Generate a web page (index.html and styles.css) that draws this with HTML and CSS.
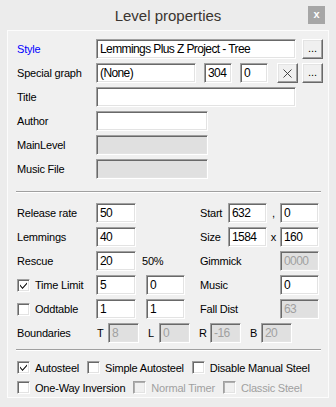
FILE: index.html
```html
<!DOCTYPE html>
<html>
<head>
<meta charset="utf-8">
<link rel="stylesheet" href="styles.css">
</head>
<body>
<div class="window">
  <div class="titlebar">
    <span class="title">Level properties</span>
    <span class="close">x</span>
  </div>
  <div class="panel">
    <div class="top">
      <div class="row">
        <span class="lbl blue">Style</span>
        <span class="edit w200">Lemmings Plus Z Project - Tree</span>
        <span class="btn ml6">...</span>
      </div>
      <div class="row">
        <span class="lbl">Special graph</span>
        <span class="edit w100">(None)</span>
        <span class="edit w28 ml8">304</span>
        <span class="edit w28 ml8">0</span>
        <span class="btn ml9 xbtn"><svg width="9" height="9" viewBox="0 0 9 9"><path d="M0.5 0.5 L8.5 8.5 M8.5 0.5 L0.5 8.5" stroke="#333" stroke-width="0.9" fill="none"/></svg></span>
        <span class="btn ml4">...</span>
      </div>
      <div class="row">
        <span class="lbl">Title</span>
        <span class="edit w200"></span>
      </div>
      <div class="row">
        <span class="lbl">Author</span>
        <span class="edit w112"></span>
      </div>
      <div class="row">
        <span class="lbl">MainLevel</span>
        <span class="edit w112 dis"></span>
      </div>
      <div class="row">
        <span class="lbl">Music File</span>
        <span class="edit w112 dis"></span>
      </div>
    </div>
    <div class="sep"></div>
    <div class="grid">
      <span class="lbl c1">Release rate</span>
      <span class="edit c2">50</span>
      <span class="lbl c6">Start</span>
      <span class="edit c7">632</span>
      <span class="lbl c8 mid">,</span>
      <span class="edit c9">0</span>

      <span class="lbl c1">Lemmings</span>
      <span class="edit c2">40</span>
      <span class="lbl c6">Size</span>
      <span class="edit c7">1584</span>
      <span class="lbl c8 mid">x</span>
      <span class="edit c9">160</span>

      <span class="lbl c1">Rescue</span>
      <span class="edit c2">20</span>
      <span class="lbl c3">50%</span>
      <span class="lbl c6w">Gimmick</span>
      <span class="edit c9 dis">0000</span>

      <span class="lbl c1 chk"><span class="box"><svg width="9" height="9" viewBox="0 0 9 9"><path d="M1 3.5 L3.5 6.5 L8 1.5 L8 3 L3.5 8 L1 5 Z" fill="#000"/></svg></span>Time Limit</span>
      <span class="edit c2">5</span>
      <span class="edit c4">0</span>
      <span class="lbl c6w">Music</span>
      <span class="edit c9">0</span>

      <span class="lbl c1 chk"><span class="box"></span>Oddtable</span>
      <span class="edit c2">1</span>
      <span class="edit c4">1</span>
      <span class="lbl c6w">Fall Dist</span>
      <span class="edit c9 dis">63</span>
    </div>
    <div class="row bounds">
      <span class="lbl">Boundaries</span>
      <span class="lbl bl">T</span><span class="edit bw dis">8</span>
      <span class="lbl bl">L</span><span class="edit bw dis">0</span>
      <span class="lbl bl">R</span><span class="edit bw dis">-16</span>
      <span class="lbl bl">B</span><span class="edit bw dis">20</span>
    </div>
    <div class="sep sep2"></div>
    <div class="checks">
      <div class="crow">
        <span class="chk"><span class="box"><svg width="9" height="9" viewBox="0 0 9 9"><path d="M1 3.5 L3.5 6.5 L8 1.5 L8 3 L3.5 8 L1 5 Z" fill="#000"/></svg></span>Autosteel</span>
        <span class="chk"><span class="box"></span>Simple Autosteel</span>
        <span class="chk"><span class="box"></span>Disable Manual Steel</span>
      </div>
      <div class="crow">
        <span class="chk"><span class="box"></span>One-Way Inversion</span>
        <span class="chk off"><span class="box"></span>Normal Timer</span>
        <span class="chk off"><span class="box"></span>Classic Steel</span>
      </div>
    </div>
  </div>
</div>
</body>
</html>
```
FILE: styles.css
```css
* { box-sizing: border-box; }
html, body { margin: 0; padding: 0; }
body {
  width: 336px;
  height: 407px;
  background: #e8e8e8;
  font-family: "Liberation Sans", Arial, sans-serif;
  color: #000;
}
.window {
  width: 336px;
  height: 407px;
  background: #ececec;
  position: relative;
  padding: 0 7px;
}
.titlebar {
  height: 30px;
  display: flex;
  align-items: center;
  justify-content: center;
}
.title {
  font-size: 15px;
  color: #3a3530;
  padding-top: 1px;
}
.close {
  position: absolute;
  left: 308px;
  top: 6px;
  width: 17px;
  height: 18px;
  background: #a6a6a6;
  color: #fff;
  font-weight: bold;
  font-size: 11px;
  line-height: 17px;
  text-align: center;
}
.panel {
  height: 368px;
  width: 322px;
  background: #f0f0f0;
  border: 1px solid #fcfcfc;
  padding: 8px 0 0 9px;
}
.row {
  display: flex;
  align-items: center;
  height: 20px;
  margin-bottom: 4px;
}
.lbl {
  font-size: 11px;
  letter-spacing: -0.2px;
  white-space: nowrap;
}
.row > .lbl:first-child { width: 79px; flex: none; }
.blue { color: #0000ff; }
.edit {
  height: 20px;
  background: #fff;
  border-top: 1px solid #a0a0a0;
  border-left: 1px solid #a0a0a0;
  border-right: 1px solid #fff;
  border-bottom: 1px solid #fff;
  box-shadow: inset 1px 1px 0 #696969, inset -1px -1px 0 #e3e3e3;
  font-size: 12px;
  letter-spacing: -0.6px;
  line-height: 18px;
  padding-left: 3px;
  white-space: nowrap;
  overflow: hidden;
  flex: none;
}
.edit.dis { background: #e0e0e0; color: #a0a0a0; }
.w200 { width: 200px; }
.w100 { width: 100px; }
.w28 { width: 28px; }
.w112 { width: 112px; }
.ml4 { margin-left: 4px; }
.ml6 { margin-left: 6px; }
.ml8 { margin-left: 8px; }
.ml9 { margin-left: 9px; }
.btn {
  width: 21px;
  height: 20px;
  flex: none;
  background: #f0f0f0;
  border-top: 1px solid #fff;
  border-left: 1px solid #fff;
  border-right: 1px solid #696969;
  border-bottom: 1px solid #696969;
  box-shadow: inset -1px -1px 0 #a0a0a0, inset 1px 1px 0 #e3e3e3;
  font-size: 11px;
  line-height: 17px;
  text-align: center;
  color: #000;
}
.xbtn { display: flex; align-items: center; justify-content: center; }
.sep {
  width: 305px;
  height: 2px;
  margin: 4px 0 10px -1px;
  border-top: 1px solid #a0a0a0;
  border-bottom: 1px solid #fff;
}
.top { height: 148px; }
.grid {
  display: grid;
  grid-template-columns: 79px 40px 10px 39px 15px 28px 39px 13px 39px;
  grid-auto-rows: 20px;
  row-gap: 4px;
  align-items: center;
  margin-bottom: 4px;
}
.c1 { grid-column: 1; }
.c2 { grid-column: 2; width: 40px; }
.c3 { grid-column: 3 / span 3; padding-left: 6px; }
.c4 { grid-column: 4; width: 39px; }
.c6 { grid-column: 6; }
.c6w { grid-column: 6 / span 3; }
.c7 { grid-column: 7; width: 39px; }
.c8 { grid-column: 8; }
.c9 { grid-column: 9; width: 39px; }
.mid { text-align: center; }
.bounds .bl { width: 12px; text-align: left; padding-left: 1px; }
.bounds .bw { width: 31px; margin-right: 8px; }
.sep2 { margin-top: 6px; margin-bottom: 10px; }
.checks { display: flex; flex-direction: column; gap: 7px; }
.crow { display: flex; align-items: center; height: 13px; }
.crow .chk { margin-right: 8px; }
.chk {
  display: flex;
  align-items: center;
  font-size: 11px;
  letter-spacing: -0.2px;
  white-space: nowrap;
}
.box {
  width: 13px;
  height: 13px;
  flex: none;
  background: #fff;
  border-top: 1px solid #a0a0a0;
  border-left: 1px solid #a0a0a0;
  border-right: 1px solid #fff;
  border-bottom: 1px solid #fff;
  box-shadow: inset 1px 1px 0 #696969, inset -1px -1px 0 #e3e3e3;
  margin-right: 5px;
  display: flex;
  align-items: center;
  justify-content: center;
}
.chk.off { color: #a0a0a0; }
.chk.off .box { background: #f0f0f0; box-shadow: inset 1px 1px 0 #b0b0b0, inset -1px -1px 0 #e3e3e3; }
```
